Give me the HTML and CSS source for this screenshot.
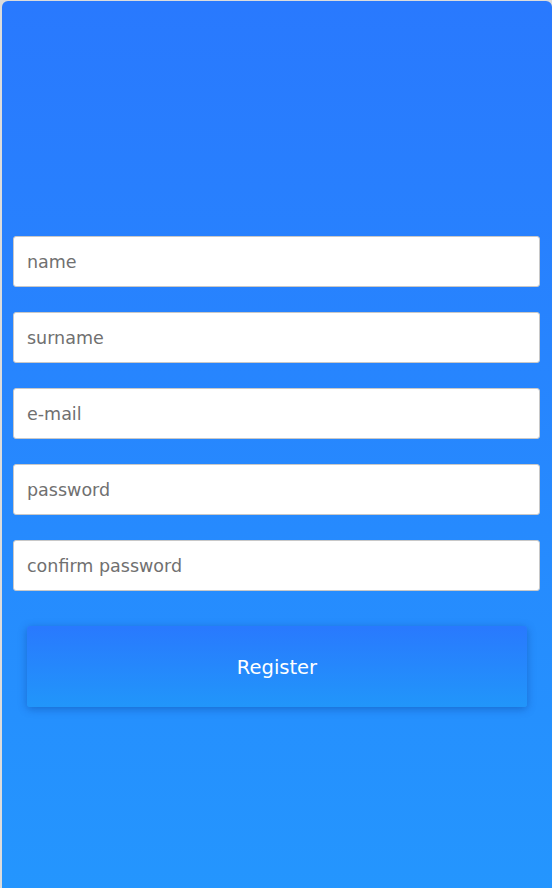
FILE: index.html
```html
<!DOCTYPE html>
<html>
<head>
<meta charset="utf-8">
<link rel="stylesheet" href="styles.css">
</head>
<body>
<div class="card">
  <form class="form">
    <input class="field" type="text" placeholder="name">
    <input class="field" type="text" placeholder="surname">
    <input class="field" type="text" placeholder="e-mail">
    <input class="field" type="password" placeholder="password">
    <input class="field" type="password" placeholder="confirm password">
    <button class="btn" type="button">Register</button>
  </form>
</div>
</body>
</html>
```
FILE: styles.css
```css
html, body {
  margin: 0;
  height: 100%;
  overflow: hidden;
}
body {
  background: #dcdcdc;
  padding: 1px 0 0 2px;
  box-sizing: border-box;
  font-family: "DejaVu Sans", Verdana, sans-serif;
}
.card {
  height: 900px;
  border-radius: 6px 6px 0 0;
  background: linear-gradient(to bottom, #2979fe 0%, #2496fe 100%);
  padding: 235px 12px 0 11px;
  box-sizing: border-box;
}
.form {
  display: flex;
  flex-direction: column;
  gap: 25px;
}
.field {
  display: block;
  width: 100%;
  height: 51px;
  box-sizing: border-box;
  border: 1px solid #c8c8c8;
  border-radius: 3px;
  background: #fff;
  padding: 1px 13px 0 13px;
  font-family: "DejaVu Sans", Verdana, sans-serif;
  font-size: 17.5px;
  color: #333;
  outline: none;
}
.field::placeholder {
  color: #707070;
}
.btn {
  margin: 10px 13px 0 14px;
  height: 81px;
  border: none;
  border-radius: 3px;
  background: linear-gradient(to bottom, #2979fe 0%, #2196fa 100%);
  box-shadow: 0 2px 8px rgba(0, 40, 120, 0.35);
  color: #fff;
  font-family: "DejaVu Sans", Verdana, sans-serif;
  font-size: 19.5px;
  padding-top: 2px;
  cursor: pointer;
}
```
